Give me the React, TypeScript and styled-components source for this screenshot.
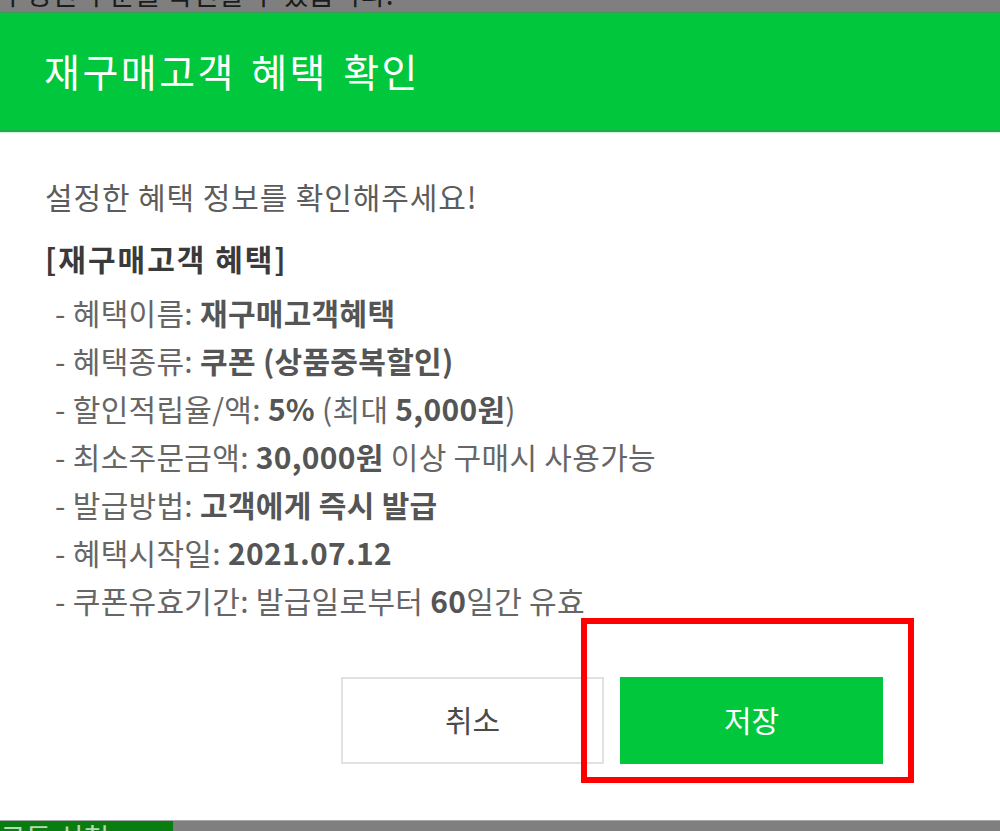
import styled, { createGlobalStyle } from 'styled-components';

const GlobalStyle = createGlobalStyle`
  html, body { margin: 0; padding: 0; }
  body {
    background: #7f7f7f;
    font-family: "Noto Sans CJK KR", "Noto Sans", "Liberation Sans", sans-serif;
  }
  * { box-sizing: border-box; }
`;

const Page = styled.div`
  width: 1000px;
  height: 831px;
  display: flex;
  flex-direction: column;
  overflow: hidden;
`;

// -- Page behind the dialog (only its edges show)
const BackdropTop = styled.div`
  height: 12px;
  flex-shrink: 0;
  background: #7f7f7f;
  overflow: hidden;
`;

const BackdropText = styled.div`
  width: 380px;
  margin-top: -21px;
  text-align: right;
  white-space: nowrap;
  font-size: 28px;
  line-height: 28px;
  color: #1c1c1c;
`;

const BackdropBottom = styled.div`
  height: 11px;
  flex-shrink: 0;
  display: flex;
  background: #7f7f7f;
  border-top: 1px solid #a9a9a9;
  overflow: hidden;
`;

const BottomTab = styled.div`
  width: 173px;
  background: #0a7d10;
  color: #b8d8b8;
  font-size: 28px;
  line-height: 28px;
  padding: 2px 0 0 0;
  white-space: nowrap;
  overflow: hidden;
`;

// -- Dialog
const Modal = styled.div`
  flex: 1;
  display: flex;
  flex-direction: column;
  background: #fff;
`;

const Header = styled.div`
  height: 120px;
  flex-shrink: 0;
  display: flex;
  align-items: center;
  padding: 0 0 4px 44px;
  background: #00c73c;
  border-top: 1px solid #3d9a5a;
  border-bottom: 2px solid #22a94c;
  box-shadow: 0 1px 0 #c9f3dc;
  color: #fff;
  font-size: 39px;
  letter-spacing: 2.5px;
  word-spacing: 4px;
`;

const Body = styled.div`
  flex: 1;
  display: flex;
  flex-direction: column;
  padding: 44px 0 0 45px;
  color: #666;
`;

const Intro = styled.p`
  margin: 0;
  font-size: 30px;
  line-height: 40px;
  letter-spacing: 0.9px;
  color: #5c5c5c;
`;

const SectionTitle = styled.h3`
  margin: 22px 0 10px 0;
  font-size: 30px;
  line-height: 40px;
  letter-spacing: 2px;
  font-weight: 700;
  color: #3a3a3a;
`;

const InfoList = styled.ul`
  list-style: none;
  margin: 0;
  padding: 0 0 0 10px;
`;

const InfoItem = styled.li`
  font-size: 30px;
  line-height: 48px;
  letter-spacing: 0.3px;
  color: #666;
  white-space: nowrap;

  strong {
    font-weight: 700;
    color: #555;
  }
`;

const ButtonRow = styled.div`
  display: flex;
  justify-content: flex-end;
  gap: 16px;
  margin-top: 53px;
  padding-right: 117px;
`;

const DialogButton = styled.button<{ $primary?: boolean }>`
  width: 263px;
  height: 87px;
  padding: 0 0 4px 0;
  border: 2px solid ${({ $primary }) => ($primary ? '#00c73c' : '#e0e0e5')};
  background: ${({ $primary }) => ($primary ? '#00c73c' : '#fff')};
  color: ${({ $primary }) => ($primary ? '#fff' : '#4a4a4a')};
  font-family: inherit;
  font-size: 30px;
  cursor: pointer;
`;

const Highlighted = styled.div`
  position: relative;
  display: flex;
`;

// red annotation box drawn over the save button
const RedMark = styled.div`
  position: absolute;
  left: -39px;
  top: -59px;
  right: -31px;
  bottom: -19px;
  border: 6px solid #ff0000;
  pointer-events: none;
`;

const items: { label: string; value: React.ReactNode }[] = [
  { label: '혜택이름', value: <strong>재구매고객혜택</strong> },
  { label: '혜택종류', value: <strong>쿠폰 (상품중복할인)</strong> },
  { label: '할인적립율/액', value: <><strong>5%</strong> (최대 <strong>5,000원</strong>)</> },
  { label: '최소주문금액', value: <><strong>30,000원</strong> 이상 구매시 사용가능</> },
  { label: '발급방법', value: <strong>고객에게 즉시 발급</strong> },
  { label: '혜택시작일', value: <strong>2021.07.12</strong> },
  { label: '쿠폰유효기간', value: <>발급일로부터 <strong>60</strong>일간 유효</> },
];

export default function App() {
  return (
    <>
      <GlobalStyle />
      <Page>
        <BackdropTop>
          <BackdropText>수정된 부분을 확인할 수 있습니다.</BackdropText>
        </BackdropTop>

        <Modal>
          <Header>재구매고객 혜택 확인</Header>
          <Body>
            <Intro>설정한 혜택 정보를 확인해주세요!</Intro>
            <SectionTitle>[재구매고객 혜택]</SectionTitle>
            <InfoList>
              {items.map((it) => (
                <InfoItem key={it.label}>
                  - {it.label}: {it.value}
                </InfoItem>
              ))}
            </InfoList>
            <ButtonRow>
              <DialogButton>취소</DialogButton>
              <Highlighted>
                <DialogButton $primary>저장</DialogButton>
                <RedMark />
              </Highlighted>
            </ButtonRow>
          </Body>
        </Modal>

        <BackdropBottom>
          <BottomTab>구독 신청</BottomTab>
        </BackdropBottom>
      </Page>
    </>
  );
}
